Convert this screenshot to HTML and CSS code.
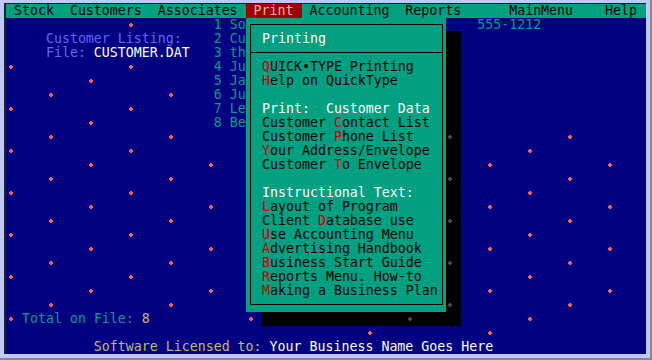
FILE: index.html
```html
<!DOCTYPE html>
<html lang="en">
<head>
  <meta charset="UTF-8" />
  <title>Customers - Print</title>
  <link rel="stylesheet" href="styles.css">
</head>
<body>

  <div class="frame">
    <div class="screen">
      <div class="row menu"> Stock  Customers  Associates <span class="sel"> Print </span> Accounting  Reports      MainMenu    Help </div>
      <div class="row">               <i class="d"></i>          <span class="t">1 So</span>                             <span class="t">555-1212</span></div>
      <div class="row">     <span class="lb">Customer Listing:</span>    <span class="t">2 Cu</span>                         <span class="sh">  </span></div>
      <div class="row">     <span class="lb">File: </span><span class="w">CUSTOMER.DAT</span>   <span class="t">3 th</span>                         <span class="sh">  </span></div>
      <div class="row"><i class="d"></i>              <i class="d"></i>          <span class="t">4 Ju</span>                         <span class="sh">  </span></div>
      <div class="row">          <i class="d"></i>               <span class="t">5 Ja</span>                         <span class="sh">  </span></div>
      <div class="row">     <i class="d"></i>              <i class="d"></i>     <span class="t">6 Ju</span>                         <span class="sh">  </span></div>
      <div class="row"><i class="d"></i>              <i class="d"></i>          <span class="t">7 Le</span>                         <span class="sh">  </span></div>
      <div class="row">          <i class="d"></i>               <span class="t">8 Be</span>                         <span class="sh">  </span></div>
      <div class="row">     <i class="d"></i>              <i class="d"></i>                                  <span class="sh"><i class="d dim"></i> </span>             <i class="d"></i></div>
      <div class="row"><i class="d"></i>              <i class="d"></i>                                       <span class="sh">  </span>        <i class="d"></i></div>
      <div class="row">          <i class="d"></i>              <i class="d"></i>                             <span class="sh">  </span>   <i class="d"></i>              <i class="d"></i></div>
      <div class="row">     <i class="d"></i>              <i class="d"></i>                                  <span class="sh"><i class="d dim"></i> </span>             <i class="d"></i></div>
      <div class="row"><i class="d"></i>              <i class="d"></i>                                       <span class="sh">  </span>        <i class="d"></i></div>
      <div class="row">          <i class="d"></i>              <i class="d"></i>                             <span class="sh">  </span>   <i class="d"></i>              <i class="d"></i></div>
      <div class="row">     <i class="d"></i>              <i class="d"></i>                                  <span class="sh"><i class="d dim"></i> </span>             <i class="d"></i></div>
      <div class="row"><i class="d"></i>              <i class="d"></i>                                       <span class="sh">  </span>        <i class="d"></i></div>
      <div class="row">          <i class="d"></i>              <i class="d"></i>                             <span class="sh">  </span>   <i class="d"></i>              <i class="d"></i></div>
      <div class="row">     <i class="d"></i>              <i class="d"></i>                                  <span class="sh"><i class="d dim"></i> </span>             <i class="d"></i></div>
      <div class="row"><i class="d"></i>              <i class="d"></i>                                       <span class="sh">  </span>        <i class="d"></i></div>
      <div class="row">          <i class="d"></i>              <i class="d"></i>                             <span class="sh">  </span>   <i class="d"></i>              <i class="d"></i></div>
      <div class="row">     <i class="d"></i>              <i class="d"></i>                                  <span class="sh"><i class="d dim"></i> </span>             <i class="d"></i></div>
      <div class="row"><i class="d"></i> <span class="t">Total on File: </span><span class="tan">8</span>            <i class="d"></i> <span class="sh">                  <i class="d dim"></i>      </span>        <i class="d"></i></div>
      <div class="row">                                             <i class="d"></i>              <i class="d"></i></div>
      <div class="row">           <span class="tan">Software Licensed to: </span><span class="w">Your Business Name Goes Here</span></div>

      <div class="popup">
        <div class="box">
          <div class="title">Printing</div>
          <div class="items">
            <div><b class="k">Q</b>UICK•TYPE Printing</div>
            <div><b class="k">H</b>elp on QuickType</div>
            <div></div>
            <div class="hd">Print:  Customer Data</div>
            <div>Customer <b class="k">C</b>ontact List</div>
            <div>Customer <b class="k">P</b>hone List</div>
            <div><b class="k">Y</b>our Address/Envelope</div>
            <div>Customer <b class="k">T</b>o Envelope</div>
            <div></div>
            <div class="hd">Instructional Text:</div>
            <div><b class="k">L</b>ayout of Program</div>
            <div>Client <b class="k">D</b>atabase use</div>
            <div><b class="k">U</b>se Accounting Menu</div>
            <div><b class="k">A</b>dvertising Handbook</div>
            <div><b class="k">B</b>usiness Start Guide</div>
            <div><b class="k">R</b>eports Menu. How-to</div>
            <div><b class="k">M</b>aking a Business Plan</div>
          </div>
        </div>
      </div>
    </div>
  </div>

</body>
</html>
```

FILE: styles.css
```css
* { box-sizing: border-box; margin: 0; padding: 0; }
body {
  background: #8088a0;
  font-family: "DejaVu Sans Mono", monospace;
  font-size: 13.288px; line-height: 14px;
}

.frame {
  width: 650px; height: 358px;
  background: #c0c8f8;
  padding: 3px 0 0 4px;
}
.screen {
  position: relative; overflow: hidden;
  width: 642px; height: 351px;
  border-top: 1px solid #202028; border-left: 2px solid #202028;
  background: #000080; color: #00a080;
}

.row { height: 14px; white-space: pre; }
.menu { background: #00a080; color: #000; }
.sel { background: #a00000; color: #f0b8a8; }

.t { color: #00a080; }
.lb { color: #6464ff; }
.w { color: #fff; }
.tan { color: #c8b878; }
.sh { background: #000; }

/* background dots, one per text cell, drawn as a small plus */
.d {
  --c: #ff6040;
  position: relative;
  display: inline-block; width: 8px; height: 14px; vertical-align: top;
}
.d::before, .d::after {
  content: ""; position: absolute; background: var(--c);
}
.d::before { left: 3px; top: 6px; width: 4px; height: 2px; }
.d::after { left: 4px; top: 5px; width: 2px; height: 4px; }
.d.dim { --c: #4c4c30; }

/* pull-down menu */
.popup {
  position: absolute; left: 240px; top: 14px;
  width: 200px; height: 294px;
  background: #00a080; color: #000;
  padding: 6px 3px 7px 4px;
}
.box { border: 1px solid #000; height: 100%; }
.title {
  height: 28px; padding: 7px 0 6px 11px;
  border-bottom: 1px solid #000;
  color: #fff; white-space: pre;
}
.items { padding: 7px 0 0 11px; }
.items div { height: 14px; white-space: pre; }
.items .hd { color: #fff; }
.k { font-weight: normal; color: #c80000; }
```
